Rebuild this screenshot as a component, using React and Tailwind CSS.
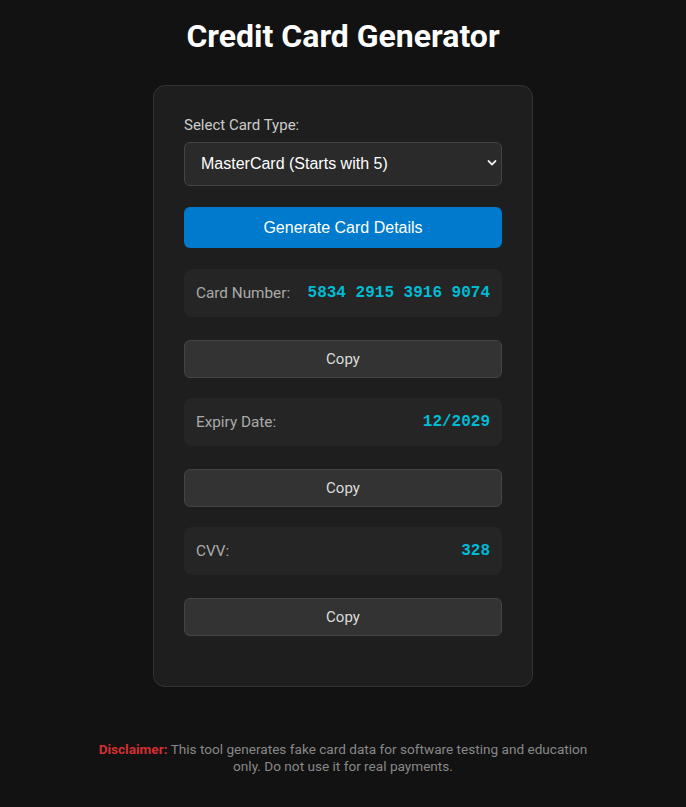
import React, { useState } from "react";

const roboto = { fontFamily: "Roboto, 'Liberation Sans', Arial, sans-serif" };

function Row({ label, value, first }) {
  return (
    <div className={`${first ? "mt-[21px]" : "mt-[20px]"} flex h-[48px] items-center justify-between rounded-lg bg-[#252525] px-3`}>
      <span className="text-[15.3px] text-[#aaaaaa]">{label}</span>
      <span
        className="text-[16px] font-bold text-[#00bcd4]"
        style={{ fontFamily: "'Liberation Mono', 'Courier New', monospace" }}
      >
        {value}
      </span>
    </div>
  );
}

function CopyBtn({ last }) {
  return (
    <button
      className={`mt-[23px] block h-[38px] w-full rounded-md border border-[#444444] bg-[#333333] text-[15px] text-[#dddddd] ${last ? "mb-[20px]" : ""}`}
    >
      Copy
    </button>
  );
}

export default function App() {
  const [type, setType] = useState("mc");
  return (
    <div className="min-h-[807px] bg-[#121212] pt-[17px] text-white" style={roboto}>
      <h1 className="text-center text-[32px] font-bold leading-[38px] text-white">
        Credit Card Generator
      </h1>
      <div className="mx-auto mt-[30px] w-[380px] rounded-xl border border-[#333333] bg-[#1e1e1e] px-[30px] pt-[30px] pb-[30px]">
        <label className="block text-[15px] leading-[18px] text-[#cccccc]">Select Card Type:</label>
        <div className="relative mt-[8px]">
          <select
            value={type}
            onChange={(e) => setType(e.target.value)}
            className="block h-[44px] w-full appearance-none rounded-md border border-[#444444] bg-[#2a2a2a] pl-[16px] text-[16px] text-white outline-none"
            style={{ fontFamily: "'Liberation Sans', Arial, sans-serif" }}
          >
            <option value="visa">Visa (Starts with 4)</option>
            <option value="mc">MasterCard (Starts with 5)</option>
            <option value="amex">American Express (Starts with 3)</option>
          </select>
          <svg
            className="pointer-events-none absolute right-[5px] top-[17px]"
            width="10"
            height="8"
            viewBox="0 0 10 8"
            fill="none"
          >
            <path d="M1.5 2 L5 5.5 L8.5 2" stroke="#e8e8e8" strokeWidth="1.8" strokeLinecap="round" strokeLinejoin="round" />
          </svg>
        </div>
        <button
          className="mt-[21px] block h-[41px] w-full rounded-md bg-[#007acc] text-[16px] text-white"
          style={{ fontFamily: "'Liberation Sans', Arial, sans-serif" }}
        >
          Generate Card Details
        </button>
        <Row first label="Card Number:" value="5834 2915 3916 9074" />
        <CopyBtn />
        <Row label="Expiry Date:" value="12/2029" />
        <CopyBtn />
        <Row label="CVV:" value="328" />
        <CopyBtn last />
      </div>
      <p className="mx-auto mt-[54px] w-[510px] text-center text-[13.6px] leading-[17px] text-[#888888]">
        <strong className="font-bold text-[#d32f2f]">Disclaimer:</strong> This tool generates fake card data for software testing and education only. Do not use it for real payments.
      </p>
    </div>
  );
}
